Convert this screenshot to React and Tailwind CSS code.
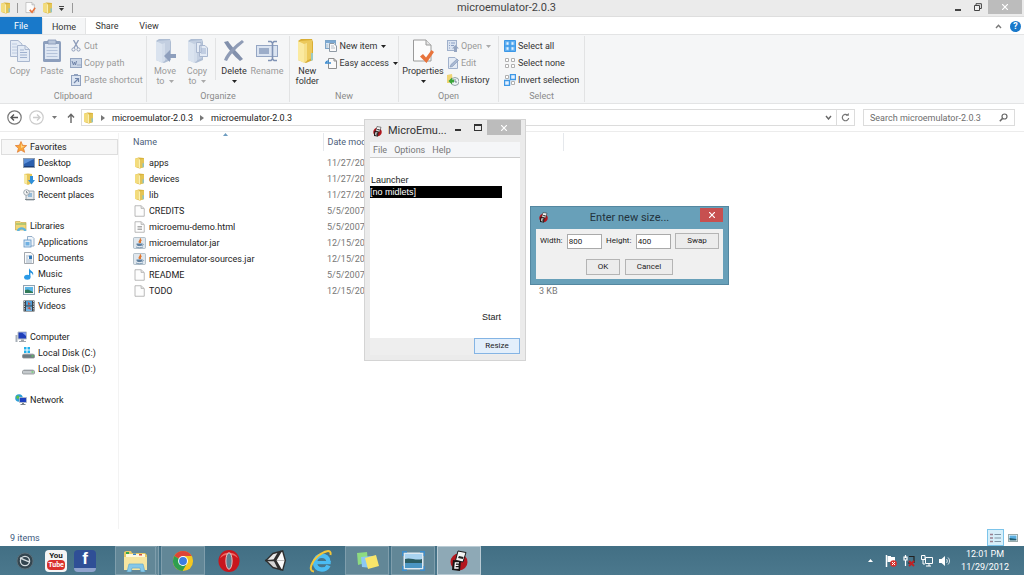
import React from 'react';

function Svg({ w, h = w, box, children, className = '' }) {
  return (
    <svg width={w} height={h} viewBox={box || `0 0 ${w} ${h}`} className={`shrink-0 ${className}`} fill="none" aria-hidden="true">
      {children}
    </svg>
  );
}

/* ---------- small shared icons ---------- */

function Folder({ w = 11, h = 12 }) {
  return (
    <Svg w={w} h={h} box="0 0 22 24">
      <path d="M3 3 L9 1 L20 2 V20 L11 23 L3 20 Z" fill="#d9b23c" />
      <path d="M2 3 L9 2 V21 L2 20 Z" fill="#f3dc7c" />
      <path d="M9 2 L12 5 V23 L9 21 Z" fill="#fbf0b0" />
      <path d="M12 5 L20 3 V20 L12 23 Z" fill="#e3c455" />
      <path d="M17 12 L20 13 V20 L17 21 Z" fill="#8fc3c4" />
    </Svg>
  );
}

function Page({ lines }) {
  return (
    <Svg w={11} h={12} box="0 0 22 24">
      <path d="M2 1.500 H14 L20.500 7 V22.500 H2 Z" fill="#fdfdfd" stroke="#a8a8a8" strokeWidth="1.600" />
      <path d="M14 1.500 V7 H20" fill="#ddd" stroke="#a8a8a8" strokeWidth="1.200" />
      {lines && <path d="M7 11 H16 M7 14 H16 M7 17 H16" stroke="#888" strokeWidth="1.400" />}
    </Svg>
  );
}

function Jar() {
  return (
    <Svg w={13} h={12} box="0 0 26 24">
      <rect x="1" y="1" width="24" height="22" rx="2" fill="#dfe7ee" stroke="#9caab6" strokeWidth="1.400" />
      <path d="M14 3 C18 6 9 8 13 12 M17 6 C13 8 15 10 15 12" stroke="#e0762d" strokeWidth="2.400" />
      <path d="M7 13 H18 V15 C18 19 8 19 7 15 Z" fill="#5d7f9f" />
      <path d="M18 14 C22 13 22 17 17 17 M6 20 C10 22 16 22 20 20" stroke="#5d7f9f" strokeWidth="1.500" />
    </Svg>
  );
}

function CheckPage({ w = 11, h = 12 }) {
  return (
    <Svg w={w} h={h} box="0 0 22 25">
      <path d="M1.500 1 H14 L19 6 V22 H1.500 Z" fill="#fcfcfc" stroke="#9a9a9a" strokeWidth="1" />
      <path d="M14 1 V6 H19" fill="#e4e4e4" stroke="#9a9a9a" strokeWidth="1" />
      <path d="M8 17.500 L11 15 L14 18.500 L19.500 11 L22 13 L14.500 24 Z" fill="#e8743c" />
    </Svg>
  );
}

function Caret({ color = '#333' }) {
  return (
    <Svg w={5} h={3}>
      <path d="M0 0 H5 L2.500 3 Z" fill={color} />
    </Svg>
  );
}

function Emu({ s = 11 }) {
  return (
    <Svg w={s} box="0 0 22 22">
      <circle cx="11" cy="12" r="8.500" fill="#b3161d" />
      <path d="M10 1 L18 2.500 L15 12 L7.500 10.500 Z" fill="#f4f4f4" stroke="#1a1a1a" strokeWidth="1" />
      <path d="M11 6 L15.500 7 L15 9 L10 8 Z" fill="#222" />
      <path d="M5 10 L13 11 L12 21 L4 20 Z" fill="#151515" />
      <path d="M11 12.800 H7.400 L6.900 18 H10.600 M7 15.400 H10.500" stroke="#fff" strokeWidth="1.300" />
    </Svg>
  );
}

/* ---------- ribbon icons ---------- */

const sheet = { fill: '#e4ebf5', stroke: '#a9b7cf' };

function CopyIcon() {
  return (
    <Svg w={22} h={24}>
      <path d="M1.500 1.500 H9 L13 5 V17.500 H1.500 Z" {...sheet} />
      <path d="M3 5 H8 M3 8 H8 M3 11 H8 M3 14 H8" stroke="#bccae0" />
      <path d="M8.500 6.500 H16 L20.500 10.500 V22.500 H8.500 Z" {...sheet} />
      <path d="M16 6.500 V10.500 H20.500" stroke="#a9b7cf" />
      <path d="M11 11 H15 M11 13.500 H18 M11 16 H18 M11 18.500 H18" stroke="#9fb1cf" />
    </Svg>
  );
}

function PasteIcon() {
  return (
    <Svg w={20} h={24}>
      <rect x="1" y="2" width="18" height="21" rx="1.500" fill="#8d9fbd" />
      <rect x="3" y="5" width="14" height="15" fill="#dfe7f3" />
      <path d="M6 1 H14 V5 H6 Z" fill="#b8c5da" stroke="#8496b5" strokeWidth=".8" />
      <path d="M4.500 8.500 H15.500 M4.500 11.500 H15.500 M4.500 14.500 H15.500 M4.500 17.500 H15.500" stroke="#b5c3da" />
    </Svg>
  );
}

function BigFolder({ gray, children }) {
  const c = gray ? ['#aebdd3', '#dae3ef', '#c3cfe1'] : ['#d9ae35', '#fbeaa0', '#ecc95b'];
  return (
    <Svg w={22} h={26}>
      <path d="M2 3 L5 1 H16 L17 4 V22 L10 25 L2 22 Z" fill={c[0]} />
      <path d="M4 3 L16 2 V20 L8 24 Z" fill={c[2]} />
      <path d="M2 3 L8 6 V25 L2 22 Z" fill={c[1]} />
      <path d="M8 6 L11 5 V23 L8 25 Z" fill={c[1]} opacity=".7" />
      {!gray && <path d="M15 15 L17 15 V22 L15 23 Z" fill="#9ccac4" />}
      {children}
    </Svg>
  );
}

function DeleteIcon() {
  return (
    <Svg w={24} h={24}>
      <path d="M2 3 L6 2 C9 7 16 14 21 20 L18 22 C12 17 6 10 2 3 Z" fill="#8290ac" />
      <path d="M20 1 L22 3 C16 8 9 14 5 22 L2 21 C5 13 13 6 20 1 Z" fill="#8f9cb6" />
    </Svg>
  );
}

function RenameIcon() {
  return (
    <Svg w={24} h={24}>
      <rect x="1.500" y="6.500" width="21" height="11" fill="#dbe4f1" stroke="#95a6c4" />
      <rect x="4" y="9" width="10" height="6" fill="#9cadc9" />
      <path d="M13 2.500 H16 L17.500 4 L19 2.500 H22 M17.500 4 V20 M13 21.500 H16 L17.500 20 L19 21.500 H22" stroke="#8093b5" strokeWidth="1.600" />
    </Svg>
  );
}

function CutIcon() {
  return (
    <Svg w={12}>
      <path d="M3.500 0 L8 8 M8.500 0 L4 8" stroke="#8e9dba" strokeWidth="1.400" />
      <circle cx="3.500" cy="9.500" r="1.600" stroke="#8e9dba" />
      <circle cx="8.500" cy="9.500" r="1.600" stroke="#8e9dba" />
    </Svg>
  );
}

function CopyPathIcon() {
  return (
    <Svg w={12}>
      <rect x=".5" y="1.500" width="11" height="9" fill="#c9d5e6" stroke="#94a5c1" />
      <path d="M2 4 L3.500 8 L4.500 5 L5.500 8 L6.500 4 M7.500 8 H8.500 M9.500 8 H10.500" stroke="#6f83a8" />
    </Svg>
  );
}

function PasteShortcutIcon() {
  return (
    <Svg w={12}>
      <rect x="1.500" y="1.500" width="9" height="10" fill="#dbe4f1" stroke="#90a1be" />
      <path d="M4 0 H8 V2 H4 Z" fill="#90a1be" />
      <path d="M4 9 L8 5 M5 4.500 H8.500 V8" stroke="#7186ab" strokeWidth="1.200" />
    </Svg>
  );
}

function NewItemIcon() {
  return (
    <Svg w={12}>
      <rect x=".5" y=".5" width="10" height="8" fill="#d9e8f4" stroke="#7ca5c8" />
      <path d="M1 2 H10" stroke="#5b95c8" strokeWidth="1.500" />
      <path d="M4.500 3.500 H9 L11.500 6 V11.500 H4.500 Z" fill="#fafafa" stroke="#8f9aa5" />
      <path d="M6 6 H9 M6 8 H10 M2 4 V8" stroke="#b4bec8" />
    </Svg>
  );
}

function EasyAccessIcon() {
  return (
    <Svg w={12}>
      <path d="M3.500 1.500 H9 L11.500 4 V11.500 H3.500 Z" fill="#fafafa" stroke="#8f8f8f" />
      <path d="M9 1.500 V4 H11.500" stroke="#8f8f8f" />
      <path d="M0 6 H6 M1 6 C1 4 2 4 4 4" stroke="#3a8bd0" strokeWidth="1.300" />
    </Svg>
  );
}

function OpenIcon() {
  return (
    <Svg w={12}>
      <rect x=".5" y=".5" width="9" height="10" fill="#dbe4f1" stroke="#9fb0cb" />
      <path d="M2 3 H3 M4 3 H8 M2 5.500 H3 M4 5.500 H7 M2 8 H3" stroke="#8ba0c4" />
      <path d="M8.500 5 L12 8.500 H10 V12 H7 V8.500 H5 Z" fill="#95a5c1" />
    </Svg>
  );
}

function EditIcon() {
  return (
    <Svg w={12}>
      <path d="M1.500 .5 H8 L10.500 3 V11.500 H1.500 Z" fill="#e4ebf5" stroke="#a0b0cb" />
      <path d="M3 10 L4 7.500 L10 2 L11.500 3.500 L5.500 9.500 Z" fill="#a8b8d2" stroke="#8093b5" strokeWidth=".6" />
    </Svg>
  );
}

function HistoryIcon() {
  return (
    <Svg w={12}>
      <path d="M0 1 L5 0 L6 9 L0 9 Z" fill="#efd474" />
      <circle cx="8" cy="7.500" r="4" fill="#eef4f4" stroke="#94a3a8" />
      <path d="M8 5 V8 H10" stroke="#56707a" strokeWidth=".8" />
      <path d="M5 3.500 L1.500 7 L5 10.500 V8.500 H7 V5.500 H5 Z" fill="#3aa53a" />
    </Svg>
  );
}

function SelectAllIcon() {
  return (
    <Svg w={12}>
      <path d="M.5 .5 H11.500 V11.500 H.5 Z M6 0 V12 M0 6 H12" fill="#63b0f0" stroke="#3b97e6" />
      <path d="M2.500 3.500 H4.500 M7.500 3.500 H9.500 M2.500 8.500 H4.500 M7.500 8.500 H9.500" stroke="#e4f2ff" strokeWidth="2.400" />
    </Svg>
  );
}

function SelectNoneIcon() {
  return (
    <Svg w={12}>
      <path d="M1.500 1.500 H4.500 V4.500 H1.500 Z M7.500 1.500 H10.500 V4.500 H7.500 Z M1.500 7.500 H4.500 V10.500 H1.500 Z M7.500 7.500 H10.500 V10.500 H7.500 Z" fill="#fff" stroke="#b0b0b0" />
    </Svg>
  );
}

function InvertIcon() {
  return (
    <Svg w={12}>
      <path d="M1.500 1.500 H4.500 V4.500 H1.500 Z M7.500 7.500 H10.500 V10.500 H7.500 Z" fill="#fff" stroke="#b0b0b0" />
      <path d="M6.500 .5 H11.500 V5.500 H6.500 Z M.5 6.500 H5.500 V11.500 H.5 Z" fill="#e4f1ff" stroke="#3e98e6" strokeWidth="1.400" />
    </Svg>
  );
}

/* ---------- navigation icons ---------- */

function Star() {
  return (
    <Svg w={12}>
      <path d="M6 .5 L7.600 4.300 L11.700 4.600 L8.600 7.300 L9.600 11.300 L6 9.100 L2.400 11.300 L3.400 7.300 L.3 4.600 L4.400 4.300 Z" fill="#f9a63a" stroke="#e0762a" strokeWidth=".7" />
      <path d="M6 2 L7 5 L9.500 5.500 L6 7 Z" fill="#fdd889" />
    </Svg>
  );
}

function Desktop() {
  return (
    <Svg w={12}>
      <rect x=".5" y="1.500" width="11" height="9" fill="#2b5fae" stroke="#8b9bb0" />
      <path d="M1 2 H11 L1 7 Z" fill="#5b8fd8" />
      <path d="M1 9.500 H11" stroke="#1b3f7c" />
    </Svg>
  );
}

function Downloads() {
  return (
    <Svg w={12}>
      <path d="M1 1 L5 .5 L9 1 V10 L5 12 L1 10 Z" fill="#e7c75a" />
      <path d="M1 1 L4 2 V11 L1 10 Z" fill="#f8e9a2" />
      <path d="M7 3 H10 V7 H12 L8.500 11.500 L5 7 H7 Z" fill="#2f8fd8" />
    </Svg>
  );
}

function Recent() {
  return (
    <Svg w={12}>
      <path d="M3 2 H11 V11 H3 Z" fill="#e3e7ea" stroke="#8d989f" strokeWidth=".8" />
      <path d="M5 5 H9 M5 7 H9" stroke="#4a90c8" />
      <circle cx="3.500" cy="3.500" r="2.800" fill="#f5f5f5" stroke="#8d989f" strokeWidth=".8" />
      <path d="M3.500 2 V3.800 H5 M2 10.500 H12" stroke="#6d7880" strokeWidth=".8" />
    </Svg>
  );
}

function Libraries() {
  return (
    <Svg w={12}>
      <path d="M.5 1.500 H5 L6 2.500 H11 V10 H.5 Z" fill="#f0d777" stroke="#c9a94a" strokeWidth=".7" />
      <path d="M1 4 H11" stroke="#7fb76a" />
      <path d="M2 11 C2 6 11 6 11.500 11 H9 C8.500 9 5 9 4.500 11 Z" fill="#5fb4dc" />
    </Svg>
  );
}

function Applications() {
  return (
    <Svg w={12}>
      <path d="M4.500 .5 H9 L11 2.500 V10 H4.500 Z" fill="#f2f6fa" stroke="#7d9cbb" strokeWidth=".8" />
      <rect x="1" y="4" width="7" height="7" fill="#dcebf7" stroke="#5c92c4" strokeWidth=".8" />
      <rect x="2.500" y="6" width="4" height="3.500" fill="#6fb0e2" />
    </Svg>
  );
}

function Documents() {
  return (
    <Svg w={12}>
      <path d="M1.500 .5 H8 L10.500 3 V11.500 H1.500 Z" fill="#fbfbfb" stroke="#8c9299" strokeWidth=".8" />
      <path d="M3 4 H6 M3 6 H5 M3 8 H9 M3 10 H9" stroke="#9fb4c8" />
      <rect x="6" y="3.500" width="3" height="3.500" fill="#3479b8" />
    </Svg>
  );
}

function Music() {
  return (
    <Svg w={12}>
      <path d="M6 0 C6.500 3 11.500 3 10 7.500 C9.500 5 8 5 7.400 4.500 V9 H6 Z" fill="#2390dc" />
      <ellipse cx="4.300" cy="9.200" rx="3.200" ry="2.500" fill="#2b9be8" />
    </Svg>
  );
}

function Pictures() {
  return (
    <Svg w={12}>
      <rect x=".5" y="1.500" width="11" height="9" fill="#f5f8fa" stroke="#8fa3b3" />
      <rect x="2" y="3" width="8" height="6" fill="#59b5e6" />
      <path d="M2 9 V6 L5 5.500 L10 8 V9 Z" fill="#2f7a58" />
    </Svg>
  );
}

function Videos() {
  return (
    <Svg w={12}>
      <rect x=".5" y=".5" width="11" height="11" fill="#3b4249" />
      <path d="M1.500 1 V11 M10.500 1 V11" stroke="#cdd3d8" strokeDasharray="1.200 1.200" />
      <rect x="3" y="1" width="6" height="4.500" fill="#4f9ed8" />
      <rect x="3" y="6.500" width="6" height="4.500" fill="#6fb4e4" />
      <path d="M5 2 L8 4 L5 5 Z M4 8 L7 7 L8 10 Z" fill="#c5513c" />
    </Svg>
  );
}

function Computer() {
  return (
    <Svg w={12}>
      <path d="M.5 4 H2.500 V11 H.5 Z" fill="#a8b0b8" />
      <path d="M3 1 H11.500 V8 H3 Z" fill="#1f3fb8" stroke="#b6bec8" />
      <path d="M7 1.500 L11 1.500 V5 Z" fill="#7f9cf0" />
      <path d="M6 8.500 H9 V10 H11 V11 H4 V10 H6 Z" fill="#9ea6ae" />
    </Svg>
  );
}

function Drive({ windows }) {
  return (
    <Svg w={13} h={12}>
      {windows && <path d="M2 0 H4.500 V2.500 H2 Z M5.500 0 H8 V2.500 H5.500 Z M2 3.500 H4.500 V6 H2 Z M5.500 3.500 H8 V6 H5.500 Z" fill="#1fb2ee" />}
      <path d="M2 6 H11 L12.500 8 H.5 Z" fill="#d8dcdf" />
      <rect x=".5" y="7.500" width="12" height="3.500" rx="1" fill={windows ? '#6d7a82' : '#c4c9cc'} stroke="#8a8f93" strokeWidth=".8" />
      <path d="M9.500 9 H11.500" stroke="#5fd35f" strokeWidth="1.200" />
    </Svg>
  );
}

function Network() {
  return (
    <Svg w={12}>
      <circle cx="4" cy="4" r="3.800" fill="#2f9fd8" />
      <path d="M1 3 C3 0 5 2 4 4 C3 6 2 5 1 3 Z" fill="#5cc04a" />
      <rect x="4.500" y="3.500" width="7" height="5" fill="#1c3fc0" stroke="#b6bec8" strokeWidth=".8" />
      <path d="M7 9 H9 V10 H10.500 V11 H5.500 V10 H7 Z" fill="#7a848c" />
    </Svg>
  );
}

/* ---------- ribbon ---------- */

function Big({ icon, label, second, caret, dim, className }) {
  return (
    <button className={`flex flex-col items-center leading-[10px] ${dim ? 'text-[#9a9a9a]' : 'text-[#333]'} ${className}`}>
      <span className="flex h-[26px] items-center">{icon}</span>
      <span className="mt-[2px] whitespace-nowrap">{label}</span>
      <span className="flex h-[10px] items-center gap-1">
        {second}
        {caret && <Caret color={dim ? '#aaa' : '#222'} />}
      </span>
    </button>
  );
}

function Small({ icon, label, caret, dim }) {
  return (
    <button className={`flex h-4 items-center gap-[2px] whitespace-nowrap ${dim ? 'text-[#9a9a9a]' : 'text-[#333]'}`}>
      {icon}
      <span>{label}</span>
      {caret && <span className="ml-[2px]"><Caret color={dim ? '#aaa' : '#222'} /></span>}
    </button>
  );
}

function Group({ title, className, children }) {
  return (
    <section className={`flex shrink-0 flex-col justify-between border-r border-[#e2e3e4] ${className}`}>
      <div className="flex items-start pt-[2px]">{children}</div>
      <h2 className="text-center leading-[11px] text-[#8a8a8a]">{title}</h2>
    </section>
  );
}

function Stack({ className = '', children }) {
  return <div className={`flex flex-col items-start gap-px ${className}`}>{children}</div>;
}

function Ribbon() {
  return (
    <div className="flex h-[70px] shrink-0 border-y border-[#e3e4e5] bg-[#f5f6f7] py-px">
      <Group title="Clipboard" className="w-[147px]">
        <Big dim icon={<CopyIcon />} label="Copy" className="ml-1 w-8" />
        <Big dim icon={<PasteIcon />} label="Paste" className="w-8" />
        <Stack className="ml-[2px]">
          <Small dim icon={<CutIcon />} label="Cut" />
          <Small dim icon={<CopyPathIcon />} label="Copy path" />
          <Small dim icon={<PasteShortcutIcon />} label="Paste shortcut" />
        </Stack>
      </Group>
      <Group title="Organize" className="w-[143px]">
        <Big dim caret second="to" icon={<BigFolder gray><path d="M10 18 L16 12 V16 H22 V20 H16 V24 Z" fill="#8e9fbd" /></BigFolder>} label="Move" className="ml-[2px] w-8" />
        <Big
          dim
          caret
          second="to"
          icon={
            <BigFolder gray>
              <path d="M10.500 4.500 H15 V14.500 H10.500 Z M13.500 7.500 H19 L21.500 10 V18.500 H13.500 Z" {...sheet} />
              <path d="M15 11 H20 M15 13 H20 M15 15 H20" stroke="#9fb1cf" />
            </BigFolder>
          }
          label="Copy"
          className="w-8"
        />
        <div className="h-[42px] w-[3px] border-r border-[#e2e3e4]" />
        <Big caret icon={<DeleteIcon />} label="Delete" className="ml-[2px] w-8" />
        <Big dim icon={<RenameIcon />} label="Rename" className="ml-px w-8" />
      </Group>
      <Group title="New" className="w-[109px]">
        <Big icon={<BigFolder />} label="New" second="folder" className="ml-[2px] w-8" />
        <Stack className="ml-[3px]">
          <Small caret icon={<NewItemIcon />} label="New item" />
          <Small caret icon={<EasyAccessIcon />} label="Easy access" />
        </Stack>
      </Group>
      <Group title="Open" className="w-[100px]">
        <Big caret icon={<CheckPage w={22} h={25} />} label="Properties" className="ml-1 w-10" />
        <Stack className="ml-1">
          <Small dim caret icon={<OpenIcon />} label="Open" />
          <Small dim icon={<EditIcon />} label="Edit" />
          <Small icon={<HistoryIcon />} label="History" />
        </Stack>
      </Group>
      <Group title="Select" className="w-[86px]">
        <Stack className="ml-[5px]">
          <Small icon={<SelectAllIcon />} label="Select all" />
          <Small icon={<SelectNoneIcon />} label="Select none" />
          <Small icon={<InvertIcon />} label="Invert selection" />
        </Stack>
      </Group>
    </div>
  );
}

/* ---------- explorer window ---------- */

function TitleBar() {
  return (
    <header className="relative flex h-[17px] shrink-0 items-center border-b border-[#dedede] bg-[#ebebeb]">
      <div className="flex items-center">
        <Folder />
        <span className="ml-[6px] h-[10px] w-px bg-[#999]" />
        <button aria-label="Properties" className="ml-[7px]"><CheckPage /></button>
        <button aria-label="New folder" className="ml-[6px]"><Folder /></button>
        <button aria-label="Customize toolbar" className="ml-[6px] flex flex-col items-center gap-px">
          <span className="h-px w-[5px] bg-[#444]" />
          <Caret />
        </button>
        <span className="ml-2 h-[10px] w-px bg-[#999]" />
      </div>
      <h1 className="flex-1 pr-2 text-center text-[11px] leading-4 text-[#444]">microemulator-2.0.3</h1>
      <div className="flex h-full items-start">
        <button aria-label="Minimize" className="flex h-[11px] w-5 items-end justify-center"><span className="h-[2px] w-[6px] bg-[#444]" /></button>
        <button aria-label="Restore" className="flex h-[13px] w-5 items-center justify-center">
          <Svg w={8}><path d="M2 2 V.7 H7.400 V5.500 H6" stroke="#444" /><path d="M.5 2.500 H5.500 V7.500 H.5 Z" fill="#eee" stroke="#444" /></Svg>
        </button>
        <button aria-label="Close" className="mr-[2px] flex h-[14px] w-[34px] items-center justify-center bg-[#bcbcbc]">
          <Svg w={6}><path d="M0 0 L6 6 M6 0 L0 6" stroke="#fff" strokeWidth="1.200" /></Svg>
        </button>
      </div>
    </header>
  );
}

function Tabs() {
  return (
    <nav className="flex h-[17px] shrink-0 items-stretch pt-px text-[#333]">
      <button className="-mt-px w-[42px] bg-[#1979ca] text-white">File</button>
      <button className="-mb-px w-[44px] border-x border-[#e3e4e5] bg-[#f5f6f7]">Home</button>
      <button className="w-[42px]">Share</button>
      <button className="w-[42px]">View</button>
      <div className="ml-auto flex items-center gap-2 pr-[3px]">
        <button aria-label="Collapse ribbon">
          <Svg w={7} h={5}><path d="M1 4 L3.500 1.200 L6 4" stroke="#777" strokeWidth="1.400" /></Svg>
        </button>
        <button aria-label="Help" className="flex h-[11px] w-[11px] items-center justify-center rounded-full bg-[#1979ca] font-bold leading-[11px] text-white">?</button>
      </div>
    </nav>
  );
}

function Crumb({ children }) {
  return (
    <>
      <Svg w={4} h={6} className="mx-[7px]"><path d="M0 0 L4 3 L0 6 Z" fill="#777" /></Svg>
      <button className="text-[#222]">{children}</button>
    </>
  );
}

function AddressBar() {
  return (
    <div className="flex h-[27px] shrink-0 items-center pl-[7px] pr-[9px]">
      <button aria-label="Back">
        <Svg w={15}><circle cx="7.500" cy="7.500" r="6.700" stroke="#777" strokeWidth="1.200" /><path d="M11 7.500 H4.500 M7 4.500 L4 7.500 L7 10.500" stroke="#555" strokeWidth="1.400" /></Svg>
      </button>
      <button aria-label="Forward" className="ml-[7px]">
        <Svg w={15}><circle cx="7.500" cy="7.500" r="6.700" stroke="#ccc" strokeWidth="1.200" /><path d="M4 7.500 H10.500 M8 4.500 L11 7.500 L8 10.500" stroke="#ccc" strokeWidth="1.400" /></Svg>
      </button>
      <button aria-label="Recent locations" className="ml-2"><Caret color="#777" /></button>
      <button aria-label="Up" className="ml-[10px]">
        <Svg w={8} h={10}><path d="M4 10 V1.500 M1 4.500 L4 1.300 L7 4.500" stroke="#666" strokeWidth="1.400" /></Svg>
      </button>
      <div className="ml-[6px] flex h-[17px] flex-1 items-center border border-[#dcdcdc] pl-px">
        <Folder />
        <Crumb>microemulator-2.0.3</Crumb>
        <Crumb>microemulator-2.0.3</Crumb>
        <button aria-label="Previous locations" className="ml-auto mr-1">
          <Svg w={7} h={5}><path d="M1 1 L3.500 4 L6 1" stroke="#666" strokeWidth="1.400" /></Svg>
        </button>
        <button aria-label="Refresh" className="flex h-full w-[18px] items-center justify-center border-l border-[#dcdcdc]">
          <Svg w={9}><path d="M6.500 2 A3.200 3.200 0 1 0 7.700 5" stroke="#777" strokeWidth="1.200" /><path d="M4.500 2.800 H7.800 V0 Z" fill="#777" /></Svg>
        </button>
      </div>
      <label className="ml-2 flex h-[17px] w-[152px] items-center border border-[#dcdcdc] pl-[6px] pr-[6px]">
        <input aria-label="Search" placeholder="Search microemulator-2.0.3" className="min-w-0 flex-1 bg-transparent outline-none placeholder:text-[#6d6d6d]" />
        <Svg w={9}><circle cx="5.500" cy="3.500" r="2.500" stroke="#666" strokeWidth="1.200" /><path d="M3.600 5.400 L.8 8.200" stroke="#666" strokeWidth="1.500" /></Svg>
      </label>
    </div>
  );
}

const places = [
  { icon: <Star />, name: 'Favorites', active: true, items: [[<Desktop />, 'Desktop'], [<Downloads />, 'Downloads'], [<Recent />, 'Recent places']] },
  { icon: <Libraries />, name: 'Libraries', items: [[<Applications />, 'Applications'], [<Documents />, 'Documents'], [<Music />, 'Music'], [<Pictures />, 'Pictures'], [<Videos />, 'Videos']] },
  { icon: <Computer />, name: 'Computer', items: [[<Drive windows />, 'Local Disk (C:)'], [<Drive />, 'Local Disk (D:)']] },
  { icon: <Network />, name: 'Network', items: [] },
];

function Sidebar() {
  return (
    <aside className="flex w-[119px] shrink-0 flex-col gap-[15px] border-r border-[#f3f3f3] pt-[6px] text-[#222]">
      {places.map(p => (
        <div key={p.name}>
          <button className={`ml-px flex h-4 w-[117px] items-center gap-[3px] border pl-[13px] ${p.active ? 'border-[#dedede] bg-[#f7f7f7]' : 'border-transparent'}`}>
            {p.icon}
            {p.name}
          </button>
          {p.items.map(([icon, name]) => (
            <button key={name} className="flex h-4 w-full items-center gap-[3px] pl-[22px]">
              <span className="flex w-[13px] justify-center">{icon}</span>
              {name}
            </button>
          ))}
        </div>
      ))}
    </aside>
  );
}

const files = [
  { icon: <Folder />, name: 'apps', date: '11/27/2012' },
  { icon: <Folder />, name: 'devices', date: '11/27/2012' },
  { icon: <Folder />, name: 'lib', date: '11/27/2012' },
  { icon: <Page />, name: 'CREDITS', date: '5/5/2007' },
  { icon: <Page lines />, name: 'microemu-demo.html', date: '5/5/2007' },
  { icon: <Jar />, name: 'microemulator.jar', date: '12/15/2009' },
  { icon: <Jar />, name: 'microemulator-sources.jar', date: '12/15/2009' },
  { icon: <Page />, name: 'README', date: '5/5/2007' },
  { icon: <Page />, name: 'TODO', date: '12/15/2009', size: '3 KB' },
];

function FileTable() {
  return (
    <main className="flex-1 pl-[9px]">
      <table className="w-[436px] table-fixed border-collapse text-left">
        <thead>
          <tr className="h-[18px] text-[#4c607a]">
            <th className="relative w-[195px] border-r border-[#e5e8ec] p-0 pl-[5px] font-normal">
              Name
              <span className="absolute left-[95px] top-0"><Svg w={5} h={3}><path d="M0 3 L2.500 0 L5 3 Z" fill="#6d9cc0" /></Svg></span>
            </th>
            <th className="w-[42px] overflow-hidden whitespace-nowrap p-0 pl-1 font-normal">Date modified</th>
            <th className="border-r border-[#e5e8ec]" aria-label="Size" />
          </tr>
        </thead>
        <tbody>
          <tr className="h-1" />
          {files.map(f => (
            <tr key={f.name} className="h-4">
              <td className="p-0">
                <div className="flex items-center gap-[3px] pl-[5px] text-[#222]">
                  <span className="flex w-[13px] justify-center">{f.icon}</span>
                  {f.name}
                </div>
              </td>
              <td className="overflow-hidden p-0 pl-1 text-[#777]">{f.date}</td>
              <td className="p-0 pr-[6px] text-right text-[#777]">{f.size}</td>
            </tr>
          ))}
        </tbody>
      </table>
    </main>
  );
}

function StatusBar() {
  return (
    <footer className="flex h-[17px] shrink-0 items-center pl-[10px] text-[#3c5a80]">
      9 items
      <div className="ml-auto flex h-full items-center gap-1 pr-[6px]">
        <button aria-label="Details" className="flex h-[17px] w-[17px] items-center justify-center border border-[#7cc4ea] bg-[#d6effa]">
          <Svg w={11} h={10}><path d="M0 1.500 H3 M0 5 H3 M0 8.500 H3" stroke="#9a7f8f" strokeWidth="1.600" /><path d="M4.500 1.500 H11 M4.500 5 H11 M4.500 8.500 H11" stroke="#7f95a5" /></Svg>
        </button>
        <button aria-label="Large icons">
          <Svg w={10} h={8}><rect x=".5" y=".5" width="9" height="7" fill="#fff" stroke="#9aa" /><path d="M1.500 1.500 H8.500 V5 H1.500 Z" fill="#5aaee0" /><path d="M1.500 4 L8.500 5 V6.500 H1.500 Z" fill="#1f5c70" /></Svg>
        </button>
      </div>
    </footer>
  );
}

/* ---------- floating windows ---------- */

function EmulatorWindow() {
  return (
    <section className="absolute left-[364px] top-[119px] flex h-[242px] w-[162px] flex-col border border-[#d4d4d4] bg-[#ebebeb] px-[5px] pb-[5px]">
      <header className="flex h-[22px] shrink-0 items-start">
        <span className="ml-[2px] mt-[6px]"><Emu /></span>
        <h2 className="ml-[5px] mt-[3px] w-[67px] text-[11px] leading-4 text-[#333]">MicroEmu...</h2>
        <button aria-label="Minimize" className="mt-[9px] h-[2px] w-[6px] bg-[#333]" />
        <button aria-label="Maximize" className="ml-[13px] mt-1 h-[7px] w-2 border border-t-2 border-[#333]" />
        <button aria-label="Close" className="-mr-px ml-auto flex h-[15px] w-[34px] items-center justify-center bg-[#bcbcbc]">
          <Svg w={6}><path d="M0 0 L6 6 M6 0 L0 6" stroke="#fff" strokeWidth="1.200" /></Svg>
        </button>
      </header>
      <div className="flex h-4 shrink-0 items-center gap-[7px] border-b border-[#ccc] bg-[#f5f6f8] pl-[3px] text-[#777]">
        <button>File</button>
        <button>Options</button>
        <button>Help</button>
      </div>
      <div className="flex flex-1 flex-col bg-white pt-4 font-['Liberation_Sans',Arial,sans-serif] leading-3 text-[#222]">
        <p className="pl-px">Launcher</p>
        <button className="h-3 w-[132px] bg-black text-left text-white">[no midlets]</button>
        <button className="mb-[15px] mr-[19px] mt-auto self-end">Start</button>
      </div>
      <div className="flex h-[17px] shrink-0 justify-end bg-[#eee]">
        <button className="h-4 w-[46px] border border-[#84b4e4] bg-[#e3effb] text-[8px] text-[#222]">Resize</button>
      </div>
    </section>
  );
}

function SizeField({ id, label, value }) {
  return (
    <>
      <label htmlFor={id}>{label}</label>
      <input id={id} defaultValue={value} className="h-[15px] w-[35px] border border-[#aaa] bg-white px-px outline-none" />
    </>
  );
}

function SizeDialog() {
  return (
    <section className="absolute left-[530px] top-[206px] flex h-[79px] w-[199px] flex-col border border-[#5487a0] bg-[#68a0b9] px-[5px] pb-[5px] text-[8px] text-[#222]">
      <header className="flex h-[22px] shrink-0 items-start">
        <span className="ml-[2px] mt-[5px]"><Emu /></span>
        <h2 className="flex-1 pl-[10px] pt-[3px] text-center text-[11px] leading-4 text-[#23333d]">Enter new size...</h2>
        <button aria-label="Close" className="mt-px flex h-[14px] w-[23px] items-center justify-center bg-[#c75050]">
          <Svg w={6}><path d="M0 0 L6 6 M6 0 L0 6" stroke="#fff" strokeWidth="1.200" /></Svg>
        </button>
      </header>
      <form className="flex flex-1 flex-col justify-between bg-[#f0f0f0] px-1 py-1">
        <div className="flex items-center justify-between">
          <SizeField id="width" label="Width:" value="800" />
          <SizeField id="height" label="Height:" value="400" />
          <button type="button" className="h-4 w-[44px] border border-[#b4b4b4] bg-[#ececec]">Swap</button>
        </div>
        <div className="flex justify-center gap-[5px]">
          <button type="button" className="h-4 w-[34px] border border-[#b4b4b4] bg-[#ececec]">OK</button>
          <button type="button" className="h-4 w-[48px] border border-[#b4b4b4] bg-[#ececec]">Cancel</button>
        </div>
      </form>
    </section>
  );
}

/* ---------- taskbar ---------- */

function TaskButton({ name, open, active, stacked, children }) {
  return (
    <button
      aria-label={name}
      className={`flex h-[29px] w-11 items-center justify-center border ${
        active ? 'border-[#b9cbd4] bg-[#8ea9b6]' : open ? 'border-[#7f9eac] bg-[#628797]' : 'border-transparent'
      } ${stacked ? 'border-r-4 border-double' : ''}`}
    >
      {children}
    </button>
  );
}

function Taskbar() {
  return (
    <nav className="flex h-[29px] shrink-0 items-center bg-linear-to-b from-[#426f84] to-[#4b788d]">
      <div className="flex w-[115px] items-center">
        <button aria-label="Launcher" className="ml-4">
          <Svg w={18}><circle cx="9" cy="9" r="8" fill="#33454f" stroke="#5b6f79" /><circle cx="9" cy="9" r="4.600" stroke="#d5dde0" strokeWidth="1.300" /><path d="M4 6 C7 7 10 9 14 10" stroke="#d5dde0" strokeWidth="1.500" /></Svg>
        </button>
        <button aria-label="YouTube" className="ml-[11px] flex h-[22px] w-[22px] flex-col items-center rounded bg-[#f5f5f5] pt-px text-[8px] font-bold leading-[9px] text-[#222]">
          <span>You</span>
          <span className="rounded-sm bg-[#d9302c] px-px text-[7px] leading-[10px] text-white">Tube</span>
        </button>
        <button aria-label="Facebook" className="ml-[7px] flex h-[22px] w-[22px] items-center justify-center rounded border-b-4 border-[#8fa3cd] bg-[#2f4f96] font-['Liberation_Sans',Arial,sans-serif] text-[17px] font-bold leading-[18px] text-white">f</button>
      </div>
      <div className="flex items-center gap-[2px]">
        <TaskButton name="File Explorer" open stacked>
          <Svg w={25} h={22}>
            <path d="M1 2 L3 1 H8 L9 3 H22 L24 5 V19 H1 Z" fill="#e6c763" />
            <path d="M3 4 H22 V8 H3 Z" fill="#fdf8e0" />
            <path d="M3 2 H6 V4 H3 Z" fill="#38a848" /><path d="M10 3.500 H13 V5 H10 Z" fill="#3a86d0" /><path d="M16 4 H19 V5.500 H16 Z" fill="#d8503c" />
            <path d="M1 7 H24 V20 H1 Z" fill="#f6e5a0" />
            <path d="M4 22 L6 14 H20 L22 22 H18 L17 18 H9 L8 22 Z" fill="#87c8e8" stroke="#5fa9d0" strokeWidth=".7" />
          </Svg>
        </TaskButton>
        <TaskButton name="Chrome" open>
          <Svg w={22} box="0 0 24 24">
            <circle cx="12" cy="12" r="11" fill="#f4c720" />
            <path d="M12 12 L2.500 6.500 A11 11 0 0 1 21.500 6.500 H12 Z" fill="#dc4437" />
            <path d="M2.500 6.500 A11 11 0 0 0 11.500 23 L16.500 14.500 L12 12 Z" fill="#2f9e4f" />
            <circle cx="12" cy="12" r="5.400" fill="#fff" /><circle cx="12" cy="12" r="4.300" fill="#3b7de0" />
          </Svg>
        </TaskButton>
        <TaskButton name="Opera">
          <Svg w={22} box="0 0 24 24"><ellipse cx="12" cy="12" rx="11.500" ry="12" fill="#c8161d" /><path d="M2.500 9 C4 1 20 1 21.500 9 C18 4 6 4 2.500 9 Z" fill="#ee6a66" /><ellipse cx="12" cy="12" rx="3.400" ry="9" fill="#5b7f90" stroke="#f0c9c6" strokeWidth="1" /></Svg>
        </TaskButton>
        <TaskButton name="Unity">
          <Svg w={23} box="0 0 24 24">
            <path d="M1 12 L9 4 L20 1 L23 12 L20 23 L9 20 Z" fill="#2e2e2e" />
            <path d="M3 12 L9.500 5.500 L14 4.300 L10 11 Z" fill="#e9e9e9" />
            <path d="M3 12 H10 L14 19.700 L9.500 18.500 Z" fill="#d5d5d5" />
            <path d="M12.500 11 L17 3.500 L19 3 L21.500 12 L19 21 L17 20.500 L12.500 13 Z" fill="#fafafa" />
            <path d="M12 12 H23" stroke="#2e2e2e" strokeWidth="1" opacity=".3" />
            <path d="M1 12 H12 L18 2 M12 12 L18 22" stroke="#2e2e2e" strokeWidth="1.800" />
          </Svg>
        </TaskButton>
        <TaskButton name="Internet Explorer">
          <Svg w={24} box="0 0 24 24">
            <path d="M19.500 16.500 C17 22.500 6 22 6 13.500 C6 4.500 19.500 4.500 19.500 13" stroke="#4bbcf3" strokeWidth="4.400" />
            <path d="M7 13.600 H21.700" stroke="#4bbcf3" strokeWidth="3.200" />
            <path d="M5 22.500 C-1.500 22 3 12 9 7 C15 2 23 -.5 21.500 6" stroke="#f3c63a" strokeWidth="2" />
          </Svg>
        </TaskButton>
        <TaskButton name="Sticky Notes" open>
          <Svg w={25} h={20}><path d="M2 2 L12 1 L13 11 L3 14 Z" fill="#8edb80" /><path d="M6 6 L17 5 L17 17 L7 16 Z" fill="#8cc8f4" /><path d="M10 7 L21 4 L24 15 L13 18 Z" fill="#f8e56a" /></Svg>
        </TaskButton>
        <TaskButton name="Photo Viewer" open>
          <Svg w={23} h={20}>
            <rect x="1.500" y="1.500" width="20" height="17" fill="#dfeaf2" /><path d="M3 3 H20 V10 H3 Z" fill="#a9d3f0" /><path d="M3 8 C8 6 14 10 20 8 V12 H3 Z" fill="#2b5c62" /><path d="M3 12 H20 V17 H3 Z" fill="#4c96c4" />
            <path d="M.5 5 V.5 H5 M18 .5 H22.500 V5 M.5 15 V19.500 H5 M18 19.500 H22.500 V15" stroke="#3c8ccb" strokeWidth="1.800" />
          </Svg>
        </TaskButton>
        <TaskButton name="MicroEmulator" active><Emu s={22} /></TaskButton>
      </div>
      <div className="ml-auto flex items-center pr-[15px] text-white">
        <Svg w={5} h={3} className="mr-3"><path d="M0 3 L2.500 0 L5 3 Z" fill="#fff" /></Svg>
        <div className="flex items-center gap-[6px]">
          <Svg w={12} h={12}><path d="M1.500 0 V12" stroke="#fff" strokeWidth="1.500" /><path d="M2.500 1 H6 V2 H10 V7 H2.500 Z" fill="#fff" /><circle cx="8.500" cy="8.500" r="3.300" fill="#d8302c" /><path d="M7 7 L10 10 M10 7 L7 10" stroke="#fff" /></Svg>
          <Svg w={12} h={12}><path d="M2.500 0 V3 M1 2 H4 V5 H1 Z M2.500 5 V11" stroke="#fff" strokeWidth="1.200" /><path d="M6 1.500 H11 V8 M5 8 H8" stroke="#222" strokeWidth="1.200" /><path d="M6 6 L11 11 M11 6 L6 11" stroke="#c02024" strokeWidth="1.800" /></Svg>
          <Svg w={12} h={12}><path d="M4.500 2.500 H11.500 V8.500 H4.500 Z M8 8.500 V11 M5 11 H10" stroke="#fff" /><path d="M.5 .5 H4 V4.500 H.5 Z M2 4.500 V9 H4" stroke="#fff" /></Svg>
          <Svg w={12} h={12}><path d="M0 4 H2.500 L6 1 V11 L2.500 8 H0 Z" fill="#fff" /><path d="M7.500 4 C8.500 5 8.500 7 7.500 8 M9 2.500 C11 4.500 11 7.500 9 9.500" stroke="#dfe9ee" /></Svg>
        </div>
        <time className="ml-[10px] pt-px text-center leading-[13px]">
          <span className="block">12:01 PM</span>
          <span className="block">11/29/2012</span>
        </time>
      </div>
    </nav>
  );
}

export default function App() {
  return (
    <div className="relative flex h-screen flex-col overflow-hidden bg-white font-['Roboto','Noto_Sans',sans-serif] text-[9px] leading-3">
      <TitleBar />
      <Tabs />
      <Ribbon />
      <AddressBar />
      <div className="flex min-h-0 flex-1 border-t border-[#ececec] pt-px">
        <Sidebar />
        <FileTable />
      </div>
      <StatusBar />
      <Taskbar />
      <EmulatorWindow />
      <SizeDialog />
    </div>
  );
}
